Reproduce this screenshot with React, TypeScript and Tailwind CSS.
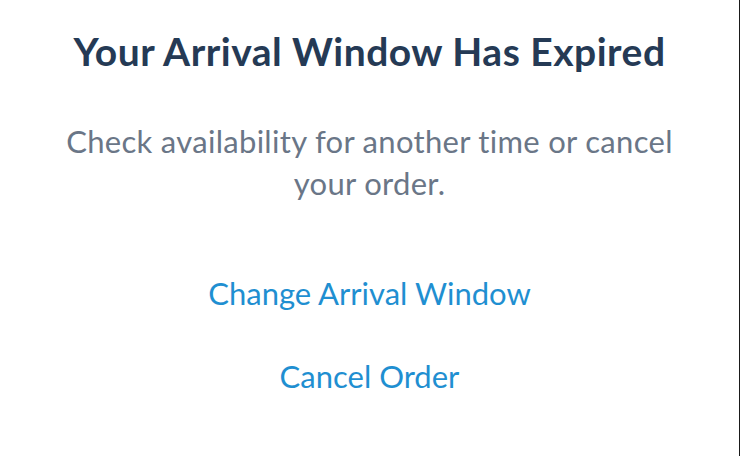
export default function App() {
  return (
    <div
      className="w-[740px] h-[456px] bg-white border-r border-[#1a1a1a] flex flex-col items-center text-center"
      style={{ fontFamily: "Lato, 'Noto Sans', sans-serif" }}
    >
      <h1 className="mt-[27px] text-[39px] leading-[48px] font-bold tracking-[0.5px] text-[#253a55]">
        Your Arrival Window Has Expired
      </h1>
      <p className="mt-[45px] w-[620px] text-[31px] leading-[42px] tracking-[0.3px] text-[#6a7687]">
        Check availability for another time or cancel your order.
      </p>
      <button className="mt-[69px] text-[31px] leading-[40px] text-[#1f8fd1]">
        Change Arrival Window
      </button>
      <button className="mt-[43px] text-[31px] leading-[40px] text-[#1f8fd1]">
        Cancel Order
      </button>
    </div>
  );
}
